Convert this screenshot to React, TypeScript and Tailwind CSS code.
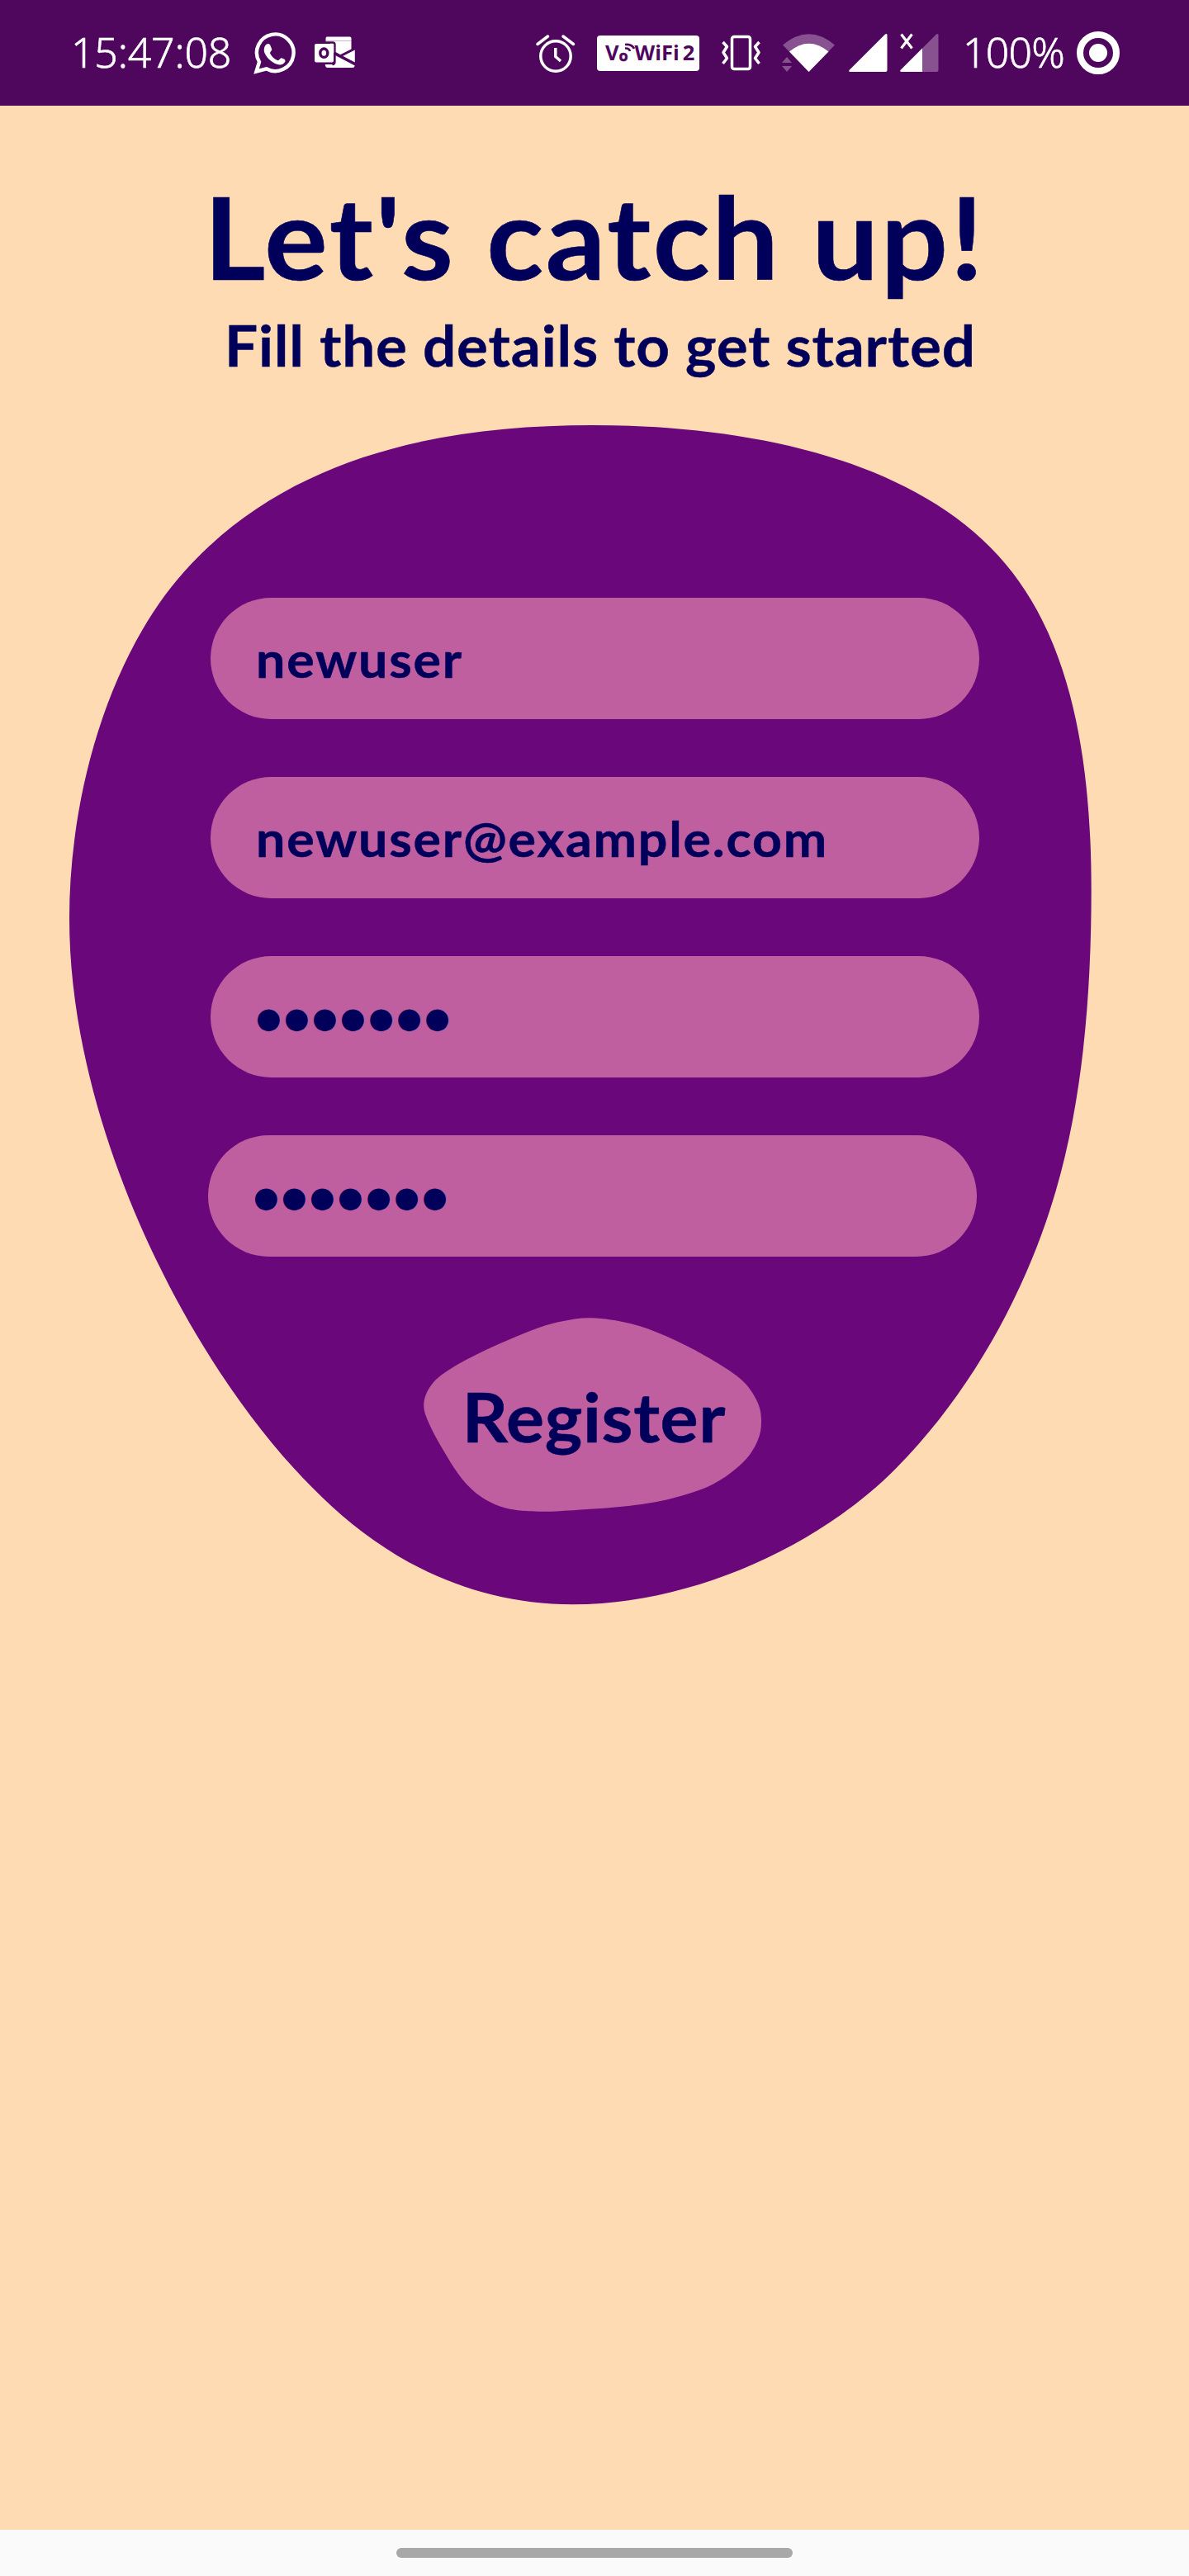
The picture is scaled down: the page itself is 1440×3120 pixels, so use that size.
import type { ReactNode } from "react";

type Point = [number, number];

// Closed Catmull-Rom spline through the given points, written as cubic segments.
function smoothPath(points: Point[]): string {
  const n = points.length;
  const at = (i: number) => points[(i + n) % n];
  let d = `M${points[0][0]} ${points[0][1]}`;
  for (let i = 0; i < n; i++) {
    const [p0, p1, p2, p3] = [at(i - 1), at(i), at(i + 1), at(i + 2)];
    const c1 = [0, 1].map((k) => p1[k] + (p2[k] - p0[k]) / 6);
    const c2 = [0, 1].map((k) => p2[k] - (p3[k] - p1[k]) / 6);
    d += `C${c1.join(" ")} ${c2.join(" ")} ${p2.join(" ")}`;
  }
  return d + "Z";
}

const cardShape =
  "M717 515C533 515 355 553 232.600 682C132.500 786.400 84 962 84 1112C84 1262 133.700 1411.600 190.500 1528.600" +
  "C243 1636.600 316.200 1745.800 401 1823.700C480.600 1896.800 578.500 1943.200 693.500 1943.200" +
  "C838.500 1943.200 992.500 1872.900 1087 1776.600C1178 1683.900 1243.800 1562 1278.800 1442" +
  "C1312.400 1326.800 1321.700 1198 1321.700 1078C1321.700 928 1300.300 772.500 1209 673C1100 554 902 515 717 515Z";

const buttonShape: Point[] = [
  [716.7, 1596.3], [680, 1600.5], [646.7, 1610.3], [590, 1634.3], [546.7, 1657.3], [523.3, 1676.3],
  [513.3, 1700], [520, 1725], [540, 1761.7], [560, 1791.7], [583.3, 1813.3], [613.3, 1826.7],
  [653.3, 1830.7], [700, 1828.7], [763.3, 1823.7], [813.3, 1815], [863.3, 1797.7], [900, 1771],
  [917.5, 1745], [922, 1720.5], [916.7, 1696.7], [896.7, 1670], [853.3, 1641.7], [806.7, 1618.3],
  [763.3, 1603],
];

function Glyph({ x, w, className, children }: { x: number; w: number; className: string; children: ReactNode }) {
  return (
    <svg className={`h-32 shrink-0 ${className}`} viewBox={`${x} 0 ${w} 128`} fill="#fff">
      {children}
    </svg>
  );
}

function StatusBar() {
  return (
    <header className="flex h-32 items-center bg-[#4e075d] pl-[86px] font-['Noto_Sans',sans-serif] text-[50px] leading-none font-light text-white">
      <span className="w-[220px] pb-[3px] tracking-[-0.200px] whitespace-nowrap [-webkit-text-stroke:0.6px_#fff]">15:47:08</span>
      <Glyph x={306} w={52} className="w-[52px]">
        <path d="M310.500 86.500 314 75A22.300 22.300 0 1 1 322.500 83.300Z" fill="none" stroke="#fff" strokeWidth="4.400" />
        <path d="M323 53.500c2-1.200 3.500-.5 4.200 1l2 5c.5 1.500-2.500 3.800-2.200 5 2 4 5 7 9.500 8.800 1.500.3 3-3.300 4.500-3l3.500 1.500c1.500 1 1 2.800.3 3.800-2 2.800-5.500 3.800-9.500 2.200-7-2.500-12.500-8-15-14-1.200-4-.2-8.500 2.700-10.300Z" />
      </Glyph>
      <Glyph x={381} w={50} className="ml-[23px] w-[50px]">
        <path d="M396 44.500h27.500q2 0 2 2v14l-13 7L400 62v-11h-5.500v-4.500q0-2 1.500-2Z" />
        <path d="M429.800 60.500v15L415 68ZM406 67l23.800 12.500q-.5 2.500-3 2.500h-30.500q-2.500-.5-2.500-4h8.500q3.700 0 3.700-3.500Z" />
        <path d="M394.500 49.400h31" stroke="#4e075d" strokeOpacity=".3" strokeWidth="1" />
        <rect x="381" y="53" width="23" height="22.500" rx="2" />
        <ellipse cx="392.300" cy="64.200" rx="4.500" ry="5.200" fill="none" stroke="#4e075d" strokeWidth="3.400" />
        <path d="M394 51.500h9q2.500 0 2.500 2.500v21q0 3-3 3" fill="none" stroke="#4e075d" strokeWidth="2.300" />
        <path d="M405 63.500 431 78M412 67.500 428 59.500" stroke="#4e075d" strokeWidth="2.300" />
      </Glyph>
      <Glyph x={648} w={50} className="ml-[217px] w-[50px]">
        <g fill="none" stroke="#fff" strokeWidth="3.500" strokeLinecap="round">
          <circle cx="673" cy="68" r="18.200" />
          <path d="m651 53.500 12.500-9.500M694.500 53.500 682 44" />
          <path d="M672.800 58v10.500l6.200 5.500" strokeLinecap="butt" />
        </g>
      </Glyph>
      <div className="ml-[25px] flex h-[43px] w-[124px] shrink-0 items-center rounded-[4px] bg-white pl-[10px] font-['Open_Sans',sans-serif] text-[25.500px] leading-none font-bold text-[#4e075d]">
        <span>V</span>
        <span className="relative w-[19px] pt-[6px] text-[18px] leading-none [-webkit-text-stroke:0.5px_#4e075d]">
          o
          <svg className="absolute top-0 left-[6px] h-3 w-[13px]" viewBox="0 0 13 12" fill="none" stroke="#4e075d" strokeWidth="2.600">
            <path d="M1 6.500q5-.5 6 3.500M1 2Q9 1 12 7" />
          </svg>
        </span>
        <span>WiFi</span>
        <span className="ml-[4px]">2</span>
      </div>
      <Glyph x={872} w={50} className="ml-[25px] w-[50px]">
        <g fill="none" stroke="#fff" strokeWidth="3.500" strokeLinejoin="round">
          <rect x="886.500" y="44.500" width="22" height="39" rx="2.500" />
          <path d="m875.500 51 5 5.500-4.500 7 4.500 7-5 6.500M919.500 51l-5 5.500 4.500 7-4.500 7 5 6.500" />
        </g>
      </Glyph>
      <Glyph x={945} w={68} className="ml-[23px] w-[68px]">
        <path d="M948 54.500Q979.500 28 1011 54.500L979.500 87Z" fill="#87528f" />
        <path d="M956 62.500q23.500-19.500 47.500 0L979.500 87Z" />
        <path d="m947 76 6-7 6 7ZM947 80h12l-6 7Z" fill="#87528f" />
      </Glyph>
      <Glyph x={1027} w={49} className="ml-[14px] w-[49px]">
        <path d="M1029.500 87q-2.500-.2-.5-2.500L1072 41.500q2.300-1.200 2.500 1V85q0 2-2 2Z" />
      </Glyph>
      <Glyph x={1089} w={49} className="ml-[13px] w-[49px]">
        <path d="M1092 87q-3-.2-1-2.500L1134 41.500q2.300-1.200 2.500 1V85q0 2-2 2Z" fill="#87528f" />
        <path d="M1092 87q-3-.2-1-2.500L1117 58.500V87Z" />
        <path d="m1091.500 41.500 13 17M1104.500 41.500l-13 17" stroke="#fff" strokeWidth="3.200" />
      </Glyph>
      <span className="ml-[28px] w-[138px] pb-[3px] tracking-[-0.800px] whitespace-nowrap [-webkit-text-stroke:0.6px_#fff]">100%</span>
      <Glyph x={1304} w={52} className="w-[52px]">
        <circle cx="1330" cy="64" r="22" fill="none" stroke="#fff" strokeWidth="8" />
        <circle cx="1330" cy="64" r="11" />
      </Glyph>
    </header>
  );
}

function Field({ value, secret, className = "" }: { value: string; secret?: boolean; className?: string }) {
  return (
    <div className={`flex h-[147px] w-[931px] items-center rounded-full bg-[#c05f9f] pl-[55px] ${className}`}>
      {secret ? (
        <span className="pt-[4px] font-['DejaVu_Sans',sans-serif] text-[35px] leading-none tracking-[3.500px]">{value}</span>
      ) : (
        <span className="origin-left scale-x-[1.045] text-[60px] leading-none tracking-[1.700px] [-webkit-text-stroke:0.5px_#00005b]">{value}</span>
      )}
    </div>
  );
}

export default function App() {
  return (
    <div className="flex h-[3120px] w-[1440px] flex-col bg-[#ffdbb4] font-['Lato',sans-serif] font-bold text-[#00005b]">
      <StatusBar />
      <main className="flex flex-1 flex-col pt-[89px]">
        <h1 className="ml-[247px] h-[138px] origin-left scale-x-[1.045] text-[137px] leading-[138px] tracking-[2.600px] whitespace-nowrap [-webkit-text-stroke:0.6px_#00005b]">
          Let's catch up!
        </h1>
        <h2 className="mt-[28px] ml-[272px] h-[69px] origin-left scale-x-[1.03] text-[69px] leading-none tracking-[0.800px] whitespace-nowrap [-webkit-text-stroke:0.4px_#00005b]">
          Fill the details to get started
        </h2>
        <section className="relative mt-[58px] h-[1440px]">
          <svg className="absolute inset-0 h-[1440px] w-[1440px]" viewBox="0 510 1440 1440">
            <path d={cardShape} fill="#6a077b" />
            <path d={smoothPath(buttonShape)} fill="#c05f9f" />
          </svg>
          <form className="relative flex flex-col gap-[70px] pt-[214px] pl-[255px]">
            <Field value="newuser" />
            <Field value="newuser@example.com" />
            <Field value="●●●●●●●" secret />
            <Field value="●●●●●●●" secret className="-ml-[3px]" />
            <button type="button" className="-mt-[3px] ml-[260px] flex h-[235px] w-[409px] items-center justify-center pt-[18px] text-[83px] leading-none [-webkit-text-stroke:0.5px_#00005b]">
              <span className="scale-x-[1.04] tracking-[0.600px]">Register</span>
            </button>
          </form>
        </section>
      </main>
      <footer className="flex h-14 items-center justify-center bg-[#fafafa]">
        <div className="h-3 w-[480px] rounded-full bg-[#a8a8a8]" />
      </footer>
    </div>
  );
}
